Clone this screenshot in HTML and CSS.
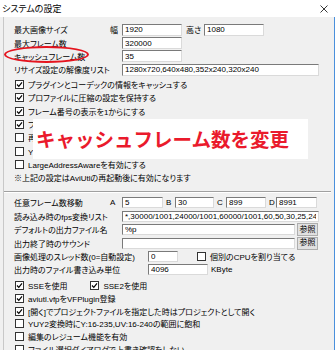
FILE: index.html
```html
<!DOCTYPE html>
<html lang="ja">

<head>
    <meta charset="UTF-8">
    <title>システムの設定</title>
    <link rel="stylesheet" href="styles.css">
</head>

<body>
    <div class="window">
        <div class="titlebar">
            <span>システムの設定</span>
            <svg class="close" width="8" height="8" viewBox="0 0 8 8">
                <path d="M0.5 0.5 L7.5 7.5 M7.5 0.5 L0.5 7.5" stroke="#222" stroke-width="0.9" />
            </svg>
        </div>

        <div class="client">
            <div class="top">
                <div class="row">
                    <span class="label">最大画像サイズ</span>
                    <span class="unit">幅</span>
                    <input class="field w60" type="text" value="1920">
                    <span class="unit tall">高さ</span>
                    <input class="field w60" type="text" value="1080">
                </div>
                <div class="row">
                    <span class="label">最大フレーム数</span>
                    <span class="unit"></span>
                    <input class="field w60" type="text" value="320000">
                </div>
                <div class="row">
                    <span class="label">キャッシュフレーム数</span>
                    <span class="unit"></span>
                    <input class="field w60" type="text" value="35">
                </div>
                <div class="row">
                    <span class="label">リサイズ設定の解像度リスト</span>
                    <span class="unit"></span>
                    <input class="field wide" type="text" value="1280x720,640x480,352x240,320x240">
                </div>
            </div>

            <div class="checks first">
                <label class="check"><span class="box on"></span>プラグインとコーデックの情報をキャッシュする</label>
                <label class="check"><span class="box on"></span>プロファイルに圧縮の設定を保持する</label>
                <label class="check"><span class="box on"></span>フレーム番号の表示を1からにする</label>
                <label class="check"><span class="box on"></span>フィルタの処理順を保存する</label>
                <label class="check"><span class="box"></span>再生ウィンドウで動画を再生する</label>
                <label class="check"><span class="box"></span>YUY2フィルタモードで処理する</label>
                <label class="check"><span class="box"></span>LargeAddressAwareを有効にする</label>
            </div>

            <p class="note">※上記の設定はAviUtlの再起動後に有効になります</p>
            <div class="separator"></div>

            <div class="bottom">
                <div class="row small">
                    <span class="label">任意フレーム数移動</span>
                    <span class="unit">A</span>
                    <input class="field w41" type="text" value="5">
                    <span class="unit abc">B</span>
                    <input class="field w39" type="text" value="30">
                    <span class="unit abc">C</span>
                    <input class="field w40" type="text" value="899">
                    <span class="unit abc d">D</span>
                    <input class="field w41" type="text" value="8991">
                </div>
                <div class="row small">
                    <span class="label">読み込み時のfps変換リスト</span>
                    <span class="unit"></span>
                    <input class="field wide" type="text" value="*,30000/1001,24000/1001,60000/1001,60,50,30,25,24,20,15,12,10,8,6,5,4,3,2,1">
                </div>
                <div class="row small">
                    <span class="label">デフォルトの出力ファイル名</span>
                    <span class="unit"></span>
                    <input class="field w173" type="text" value="%p">
                    <button class="browse">参照</button>
                </div>
                <div class="row small">
                    <span class="label">出力終了時のサウンド</span>
                    <span class="unit"></span>
                    <input class="field w173" type="text" value="">
                    <button class="browse">参照</button>
                </div>
                <div class="row small">
                    <span class="label long">画像処理のスレッド数(0=自動設定)</span>
                    <input class="field w30" type="text" value="0">
                    <label class="check inline"><span class="box"></span>個別のCPUを割り当てる</label>
                </div>
                <div class="row small">
                    <span class="label long">出力時のファイル書き込み単位</span>
                    <input class="field w60" type="text" value="4096">
                    <span class="suffix">KByte</span>
                </div>
            </div>

            <div class="checks second">
                <div class="pair">
                    <label class="check"><span class="box on"></span>SSEを使用</label>
                    <label class="check sse2"><span class="box on"></span>SSE2を使用</label>
                </div>
                <label class="check"><span class="box on"></span>aviutl.vfpをVFPlugin登録</label>
                <label class="check"><span class="box on"></span>[開く]でプロジェクトファイルを指定した時はプロジェクトとして開く</label>
                <label class="check"><span class="box"></span>YUY2変換時にY:16-235,UV:16-240の範囲に飽和</label>
                <label class="check"><span class="box"></span>編集のレジューム機能を有効</label>
                <label class="check"><span class="box"></span>ファイル選択ダイアログで上書き確認をしない</label>
            </div>
        </div>

        <div class="mark"></div>
        <div class="callout">キャッシュフレーム数を変更</div>
    </div>
</body>

</html>
```

FILE: styles.css
```css
body {
    margin: 0;
    background: #f0f0f0;
    font-family: "Liberation Sans", "Noto Sans CJK JP", sans-serif;
    font-size: 8px;
    color: #000;
    font-feature-settings: "palt";
}

.window {
    position: relative;
    width: 335px;
    height: 350px;
    overflow: hidden;
}

.titlebar {
    height: 17px;
    background: #fff;
    display: flex;
    align-items: center;
    justify-content: space-between;
    padding: 0 7px 0 2px;
    font-size: 9px;
}

.client {
    height: 333px;
    margin-left: 3px;
    border-left: 1px solid #c8c8c8;
    border-right: 1px solid #4a90dc;
    box-sizing: border-box;
    padding-left: 10px;
}

.top {
    padding-top: 6px;
}

.row {
    display: flex;
    align-items: center;
    height: 13.4px;
}

.label {
    width: 96px;
    white-space: nowrap;
}

.label.long {
    width: 134px;
}

.unit {
    width: 12px;
    text-align: left;
}

.unit.tall {
    width: 18px;
    margin-left: 4px;
}

.unit.abc {
    width: 9px;
    margin-left: 3px;
}

.unit.d {
    width: 7px;
}

.field {
    height: 12px;
    box-sizing: border-box;
    border: 1px solid;
    border-color: #7a7a7a #dadada #dadada #7a7a7a;
    background: #fff;
    padding: 0 2px;
    font: inherit;
    font-size: 8px;
    line-height: 10px;
    color: #000;
    outline: none;
}

.small .field {
    height: 11px;
}

.w30 { width: 30px; }
.w39 { width: 39px; }
.w40 { width: 40px; }
.w41 { width: 41px; }
.w60 { width: 60px; }
.w173 { width: 173px; }
.wide { width: 197px; }

.browse {
    width: 21px;
    height: 13px;
    margin-left: 2px;
    padding: 0;
    border: 1px solid #adadad;
    background: #e1e1e1;
    font: inherit;
    font-size: 8px;
    line-height: 10px;
    color: #000;
}

.suffix {
    margin-left: 3px;
}

.checks.first {
    margin-top: 1px;
}

.check {
    display: flex;
    align-items: center;
    height: 13.4px;
    white-space: nowrap;
    padding-left: 1px;
}

.checks.second {
    margin-top: 2.6px;
}

.checks.second .check {
    height: 12.8px;
}

.pair {
    display: flex;
}

.check.sse2 {
    margin-left: 22px;
}

.check.inline {
    margin-left: 18px;
}

.box {
    width: 9px;
    height: 9px;
    box-sizing: border-box;
    border: 1px solid #333;
    background: #fff;
    margin-right: 4px;
    flex: none;
}

.box.on {
    background: #fff url("data:image/svg+xml,%3Csvg xmlns='http://www.w3.org/2000/svg' width='7' height='7' viewBox='0 0 7 7'%3E%3Cpath d='M1 3.5 L2.8 5.4 L6 1.3' fill='none' stroke='%23000' stroke-width='1.2'/%3E%3C/svg%3E") center no-repeat;
}

.note {
    margin: 1px 0 0;
    height: 13.4px;
    line-height: 13.4px;
    white-space: nowrap;
}

.separator {
    margin: 5px 3px 0 -10px;
    border-top: 1px solid #a0a0a0;
    border-bottom: 1px solid #fff;
}

.bottom {
    padding-top: 3.5px;
}

.mark {
    position: absolute;
    left: 4px;
    top: 46px;
    width: 85px;
    height: 17px;
    box-sizing: border-box;
    border: 2.5px solid #e5141e;
    border-radius: 50%;
}

.callout {
    position: absolute;
    left: 33px;
    top: 119px;
    width: 275px;
    height: 40px;
    box-sizing: border-box;
    padding-left: 3px;
    background: #fff;
    color: #ea1a2c;
    font-family: "Noto Sans CJK JP", sans-serif;
    font-feature-settings: normal;
    font-weight: bold;
    font-size: 19.5px;
    line-height: 40px;
    white-space: nowrap;
}
```
